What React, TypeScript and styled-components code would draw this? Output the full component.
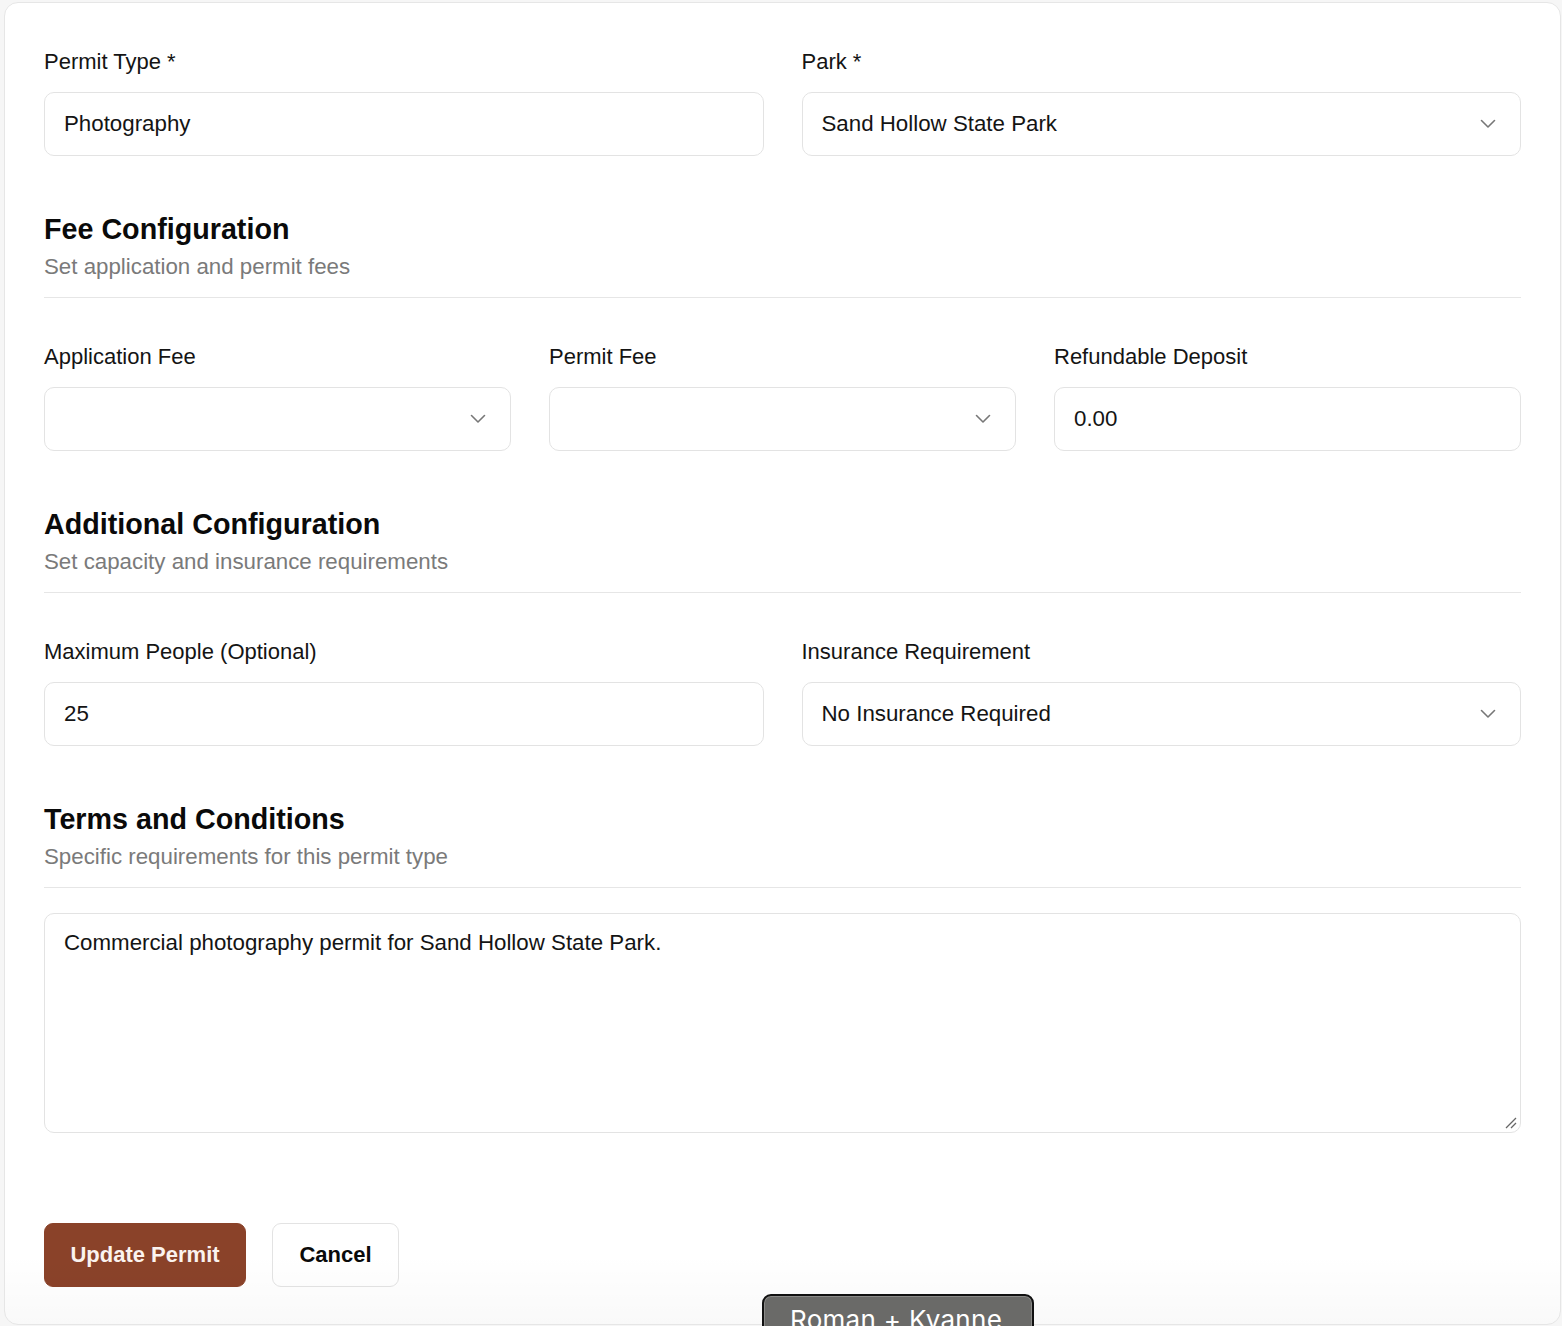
import React from "react";
import styled, { createGlobalStyle } from "styled-components";

const Global = createGlobalStyle`
  html, body { margin: 0; padding: 0; background: #f6f6f6; }
  body { font-family: "Liberation Sans", Arial, Helvetica, sans-serif; color: #111; }
  * { box-sizing: border-box; }
`;

const Page = styled.div`
  padding: 2px 1px 0 4px;
  min-height: 1326px;
`;

const Card = styled.form`
  position: relative;
  background: #ffffff;
  border: 1px solid #e6e6e6;
  border-radius: 14px;
  padding: 43px 39px 37px 39px;
  display: flex;
  flex-direction: column;
  overflow: hidden;
  &::after {
    content: "";
    position: absolute;
    left: 0;
    right: 0;
    bottom: 0;
    height: 70px;
    background: linear-gradient(to bottom, rgba(0,0,0,0), rgba(0,0,0,0.025));
    pointer-events: none;
  }
`;

const Grid = styled.div<{ $cols: number }>`
  display: grid;
  grid-template-columns: repeat(${(p) => p.$cols}, 1fr);
  column-gap: 38px;
`;

const Field = styled.div`
  display: flex;
  flex-direction: column;
  gap: 14px;
`;

const Label = styled.label`
  font-size: 22px;
  line-height: 32px;
  color: #141414;
`;

const Box = styled.div`
  height: 64px;
  border: 1px solid #e3e3e3;
  border-radius: 10px;
  background: #fff;
  display: flex;
  align-items: center;
  justify-content: space-between;
  padding: 0 24px 0 19px;
  font-size: 22.3px;
  color: #141414;
`;

const Section = styled.div<{ $gapAfter: number }>`
  margin-top: 55px;
  padding-bottom: 14px;
  border-bottom: 1px solid #e6e6e6;
  margin-bottom: ${(p) => p.$gapAfter}px;
  display: flex;
  flex-direction: column;
  gap: 4px;
`;

const Heading = styled.h2`
  margin: 0;
  font-size: 28.7px;
  line-height: 36px;
  font-weight: 700;
  color: #0a0a0a;
`;

const Sub = styled.p`
  margin: 0;
  font-size: 22.3px;
  line-height: 32px;
  color: #7a7a7a;
`;

const TextArea = styled.div`
  position: relative;
  height: 220px;
  border: 1px solid #e3e3e3;
  border-radius: 10px;
  padding: 15px 19px;
  font-size: 22.3px;
  line-height: 28px;
  color: #141414;
`;

const Grip = styled.svg`
  position: absolute;
  right: 2px;
  bottom: 2px;
`;

const Actions = styled.div`
  margin-top: 90px;
  display: flex;
  gap: 26px;
`;

const Button = styled.button<{ $primary?: boolean }>`
  height: 64px;
  padding: 0 25px;
  border-radius: 9px;
  font-family: "Liberation Sans", Arial, sans-serif;
  font-weight: 700;
  font-size: 22px;
  border: 1px solid ${(p) => (p.$primary ? "#8a4229" : "#e3e3e3")};
  background: ${(p) => (p.$primary ? "#8a4229" : "#fff")};
  color: ${(p) => (p.$primary ? "#fbf3ef" : "#0a0a0a")};
  min-width: ${(p) => (p.$primary ? "202px" : "127px")};
`;

const Badge = styled.div`
  position: fixed;
  left: 762px;
  top: 1294px;
  width: 272px;
  height: 60px;
  background: #6a6a68;
  border: 2px solid #111;
  border-radius: 9px;
  box-shadow: inset 0 0 0 1px #8a8a88;
  color: #fff;
  font-family: Inter, "Open Sans", sans-serif;
  font-size: 26px;
  padding: 8px 0 0 26px;
  letter-spacing: 0.3px;
`;

const Chevron = () => (
  <svg width="16" height="10" viewBox="0 0 16 10" fill="none">
    <path d="M1.5 1.5 L8 8 L14.5 1.5" stroke="#777" strokeWidth="1.6" strokeLinecap="round" strokeLinejoin="round" />
  </svg>
);

export default function App() {
  return (
    <Page>
      <Global />
      <Card onSubmit={(e) => e.preventDefault()}>
        <Grid $cols={2}>
          <Field>
            <Label>Permit Type *</Label>
            <Box>Photography</Box>
          </Field>
          <Field>
            <Label>Park *</Label>
            <Box>
              <span>Sand Hollow State Park</span>
              <Chevron />
            </Box>
          </Field>
        </Grid>

        <Section $gapAfter={43}>
          <Heading>Fee Configuration</Heading>
          <Sub>Set application and permit fees</Sub>
        </Section>

        <Grid $cols={3}>
          <Field>
            <Label>Application Fee</Label>
            <Box>
              <span />
              <Chevron />
            </Box>
          </Field>
          <Field>
            <Label>Permit Fee</Label>
            <Box>
              <span />
              <Chevron />
            </Box>
          </Field>
          <Field>
            <Label>Refundable Deposit</Label>
            <Box>0.00</Box>
          </Field>
        </Grid>

        <Section $gapAfter={43}>
          <Heading>Additional Configuration</Heading>
          <Sub>Set capacity and insurance requirements</Sub>
        </Section>

        <Grid $cols={2}>
          <Field>
            <Label>Maximum People (Optional)</Label>
            <Box>25</Box>
          </Field>
          <Field>
            <Label>Insurance Requirement</Label>
            <Box>
              <span>No Insurance Required</span>
              <Chevron />
            </Box>
          </Field>
        </Grid>

        <Section $gapAfter={25}>
          <Heading>Terms and Conditions</Heading>
          <Sub>Specific requirements for this permit type</Sub>
        </Section>

        <TextArea>
          Commercial photography permit for Sand Hollow State Park.
          <Grip width="14" height="14" viewBox="0 0 14 14">
            <path d="M2 12 L12 2 M7 12 L12 7" stroke="#666" strokeWidth="1.3" />
          </Grip>
        </TextArea>

        <Actions>
          <Button $primary type="submit">Update Permit</Button>
          <Button type="button">Cancel</Button>
        </Actions>
      </Card>
      <Badge>Roman + Kyanne</Badge>
    </Page>
  );
}
